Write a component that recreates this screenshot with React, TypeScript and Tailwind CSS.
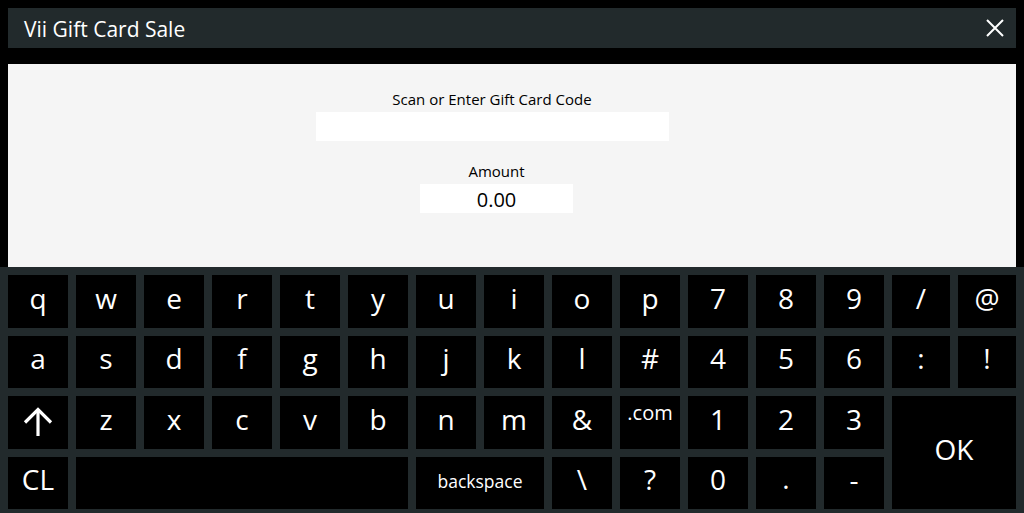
import React from "react";

const font = { fontFamily: '"Open Sans", "Noto Sans", sans-serif' };

type K = { label?: React.ReactNode; cls?: string; tcls?: string };

function Key({ label, cls = "pb-[7px]", tcls = "text-[28px]" }: K) {
  return (
    <div className={`bg-black flex items-center justify-center text-white ${cls}`}>
      <span className={`leading-none ${tcls}`}>{label}</span>
    </div>
  );
}

const ShiftArrow = () => (
  <svg width="30" height="30" viewBox="0 0 30 30" fill="none" stroke="white" strokeWidth="3.2" strokeLinecap="butt">
    <path d="M15 29 V3" />
    <path d="M2 15.5 L15 2.5 L28 15.5" />
  </svg>
);

export default function App() {
  const row1 = ["q", "w", "e", "r", "t", "y", "u", "i", "o", "p", "7", "8", "9", "/", "@"];
  const row2 = ["a", "s", "d", "f", "g", "h", "j", "k", "l", "#", "4", "5", "6", ":", "!"];
  const row3 = ["z", "x", "c", "v", "b", "n", "m", "&"];
  return (
    <div className="w-[1024px] h-[513px] bg-black flex flex-col overflow-hidden" style={font}>
      <div className="mx-2 mt-2 h-10 bg-[#222a2c] flex items-center justify-between pl-4 pr-3">
        <span className="text-white text-[21px] leading-none mt-[2px]">Vii Gift Card Sale</span>
        <svg width="18" height="18" viewBox="0 0 18 18" stroke="white" strokeWidth="2">
          <path d="M1 1 L17 17 M17 1 L1 17" />
        </svg>
      </div>
      <div className="mx-2 mt-4 h-[203px] bg-[#f5f5f5] flex flex-col items-center pt-[25px]">
        <div className="flex flex-col items-center pr-[40px]">
          <div className="text-[15px] leading-[20px] text-black">Scan or Enter Gift Card Code</div>
          <div className="mt-[3px] w-[353px] h-[29px] bg-white" />
        </div>
        <div className="flex flex-col items-center pr-[31px] mt-[20px]">
          <div className="text-[15px] leading-[20px] text-black">Amount</div>
          <div className="mt-[3px] w-[153px] h-[29px] bg-white flex items-center justify-center text-[20px] leading-none text-black">
            <span className="mt-[2px]">0.00</span>
          </div>
        </div>
      </div>
      <div className="h-[246px] bg-[#222a2c] px-2 pt-2 pb-1 grid grid-cols-[repeat(13,60px)_58px_58px] grid-rows-[repeat(4,minmax(0,1fr))] gap-2">
        {row1.map((k) => (
          <Key key={"r1" + k} label={k} />
        ))}
        {row2.map((k) => (
          <Key key={"r2" + k} label={k} />
        ))}
        <div className="bg-black flex items-center justify-center">
          <ShiftArrow />
        </div>
        {row3.map((k) => (
          <Key key={"r3" + k} label={k} />
        ))}
        <div className="bg-black flex justify-center text-white">
          <span className="text-[20px] leading-none mt-[7px]">.com</span>
        </div>
        <Key label="1" />
        <Key label="2" />
        <Key label="3" />
        <Key label="OK" cls="col-span-2 row-span-2 pb-[7px]" />
        <Key label="CL" />
        <Key label="" cls="col-span-5" />
        <Key label="backspace" cls="col-span-2 pb-[3px]" tcls="text-[17.5px]" />
        <Key label="\" />
        <Key label="?" />
        <Key label="0" />
        <Key label="." cls="pb-[9px]" />
        <Key label="-" />
      </div>
    </div>
  );
}
